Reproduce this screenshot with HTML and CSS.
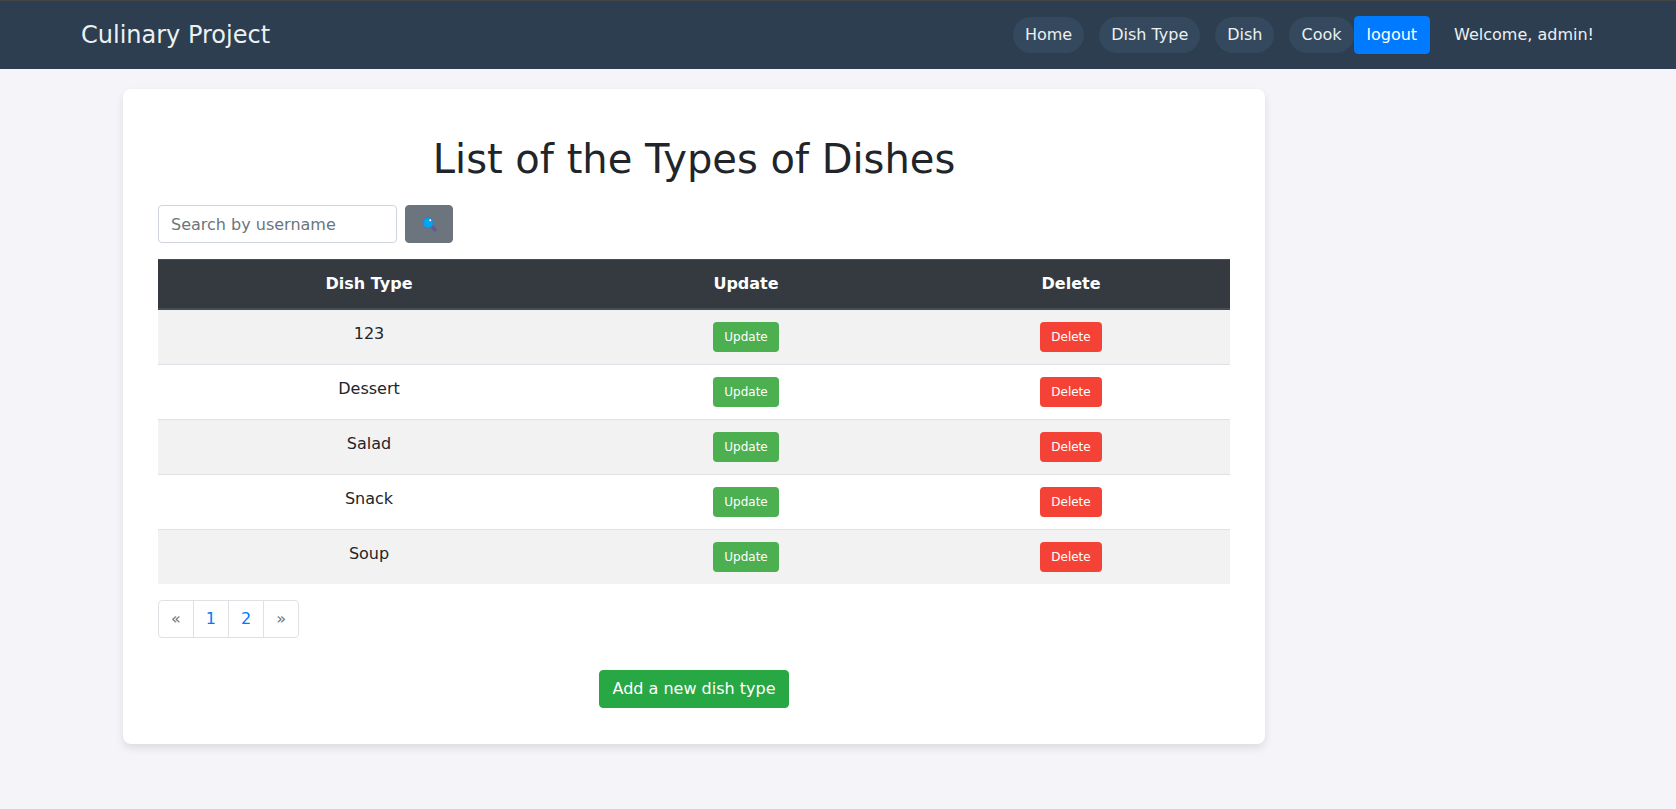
FILE: index.html
```html
<!DOCTYPE html>
<html lang="en">
<head>
<meta charset="utf-8">
<meta name="viewport" content="width=device-width, initial-scale=1">
<title>Culinary Project</title>
<link rel="stylesheet" href="styles.css">
</head>
<body>
<header class="topbar">
  <a class="brand" href="#">Culinary Project</a>
  <nav class="menu">
    <ul class="menu-list">
      <li><a class="pill" href="#">Home</a></li>
      <li><a class="pill" href="#">Dish Type</a></li>
      <li><a class="pill" href="#">Dish</a></li>
      <li><a class="pill" href="#">Cook</a></li>
    </ul>
    <button class="btn btn-primary" type="button">logout</button>
    <span class="welcome">Welcome, admin!</span>
  </nav>
</header>
<main class="card">
  <h1 class="title">List of the Types of Dishes</h1>
  <form class="search">
    <input class="search-input" type="text" aria-label="Search by username" placeholder="Search by username">
    <button class="btn btn-secondary" type="button" aria-label="Search">
      <svg class="search-icon" width="20" height="22" viewBox="0 0 20 22" aria-hidden="true">
        <path d="M13.2 14L16 16.700" stroke="#635994" stroke-width="3.600" stroke-linecap="round"/>
        <circle cx="9" cy="9.800" r="5.400" fill="#00a6ed" stroke="#5f6bab" stroke-width="1"/>
        <circle cx="11.200" cy="7.200" r="1" fill="#fff"/>
      </svg>
    </button>
  </form>
  <table class="dishes">
    <thead>
      <tr><th class="col-name" scope="col">Dish Type</th><th class="col-update" scope="col">Update</th><th scope="col">Delete</th></tr>
    </thead>
    <tbody>
      <tr><td>123</td><td><a class="action update" href="#">Update</a></td><td><a class="action delete" href="#">Delete</a></td></tr>
      <tr><td>Dessert</td><td><a class="action update" href="#">Update</a></td><td><a class="action delete" href="#">Delete</a></td></tr>
      <tr><td>Salad</td><td><a class="action update" href="#">Update</a></td><td><a class="action delete" href="#">Delete</a></td></tr>
      <tr><td>Snack</td><td><a class="action update" href="#">Update</a></td><td><a class="action delete" href="#">Delete</a></td></tr>
      <tr><td>Soup</td><td><a class="action update" href="#">Update</a></td><td><a class="action delete" href="#">Delete</a></td></tr>
    </tbody>
  </table>
  <ul class="pages">
    <li><a class="page muted" href="#">«</a></li>
    <li><a class="page" href="#">1</a></li>
    <li><a class="page" href="#">2</a></li>
    <li><a class="page muted" href="#">»</a></li>
  </ul>
  <div class="add">
    <a class="btn btn-success" href="#">Add a new dish type</a>
  </div>
</main>
</body>
</html>
```
FILE: styles.css
```css
*, *::before, *::after { box-sizing: border-box; }

body {
  margin: 0;
  background: #f4f4f9;
  color: #212529;
  font-family: Verdana, "DejaVu Sans", sans-serif;
  font-size: 16px;
  line-height: 24px;
}

a { text-decoration: none; }

.topbar {
  display: flex;
  align-items: center;
  justify-content: space-between;
  padding: 15px 82px 15px 81px;
  border-top: 1px solid #444;
  background: #2c3e50;
}

.brand { color: #ecf0f1; font-size: 24px; line-height: 36px; }

.menu { display: flex; align-items: center; }

.menu-list {
  display: flex;
  gap: 15px;
  margin: 0;
  padding: 0;
  list-style: none;
}

.pill {
  display: block;
  padding: 8px 12px;
  border-radius: 20px;
  background: #34495e;
  color: #ecf0f1;
  line-height: 20px;
}

.welcome { margin-left: 24px; color: #ecf0f1; }

.btn {
  display: inline-block;
  padding: 6px 12px;
  border: 1px solid transparent;
  border-radius: 4px;
  color: #fff;
  font: inherit;
  text-align: center;
  cursor: pointer;
}

.btn-primary { background: #007bff; border-color: #007bff; }
.btn-secondary { min-width: 48px; background: #6c757d; border-color: #6c757d; }
.btn-success { background: #28a745; border-color: #28a745; }

.card {
  max-width: 1142px;
  margin: 20px 0 20px 123px;
  padding: 35px 35px 36px;
  border-radius: 8px;
  background: #fff;
  box-shadow: 0 4px 8px rgba(0, 0, 0, 0.1);
}

.title {
  margin: 11px 0 22px;
  font-size: 40px;
  font-weight: 400;
  line-height: 48px;
  text-align: center;
}

.search { display: flex; gap: 8px; margin-bottom: 16px; }

.search-input {
  width: 239px;
  height: 38px;
  padding: 6px 12px;
  border: 1px solid #ced4da;
  border-radius: 4px;
  background: #fff;
  color: #495057;
  font: inherit;
}

.search-input::placeholder { color: #6c757d; opacity: 1; }

.search-icon { display: block; margin: 0 auto; }

.dishes {
  width: 100%;
  margin-bottom: 16px;
  border-collapse: collapse;
  table-layout: fixed;
  text-align: center;
}

.col-name { width: 422px; }
.col-update { width: 332px; }

.dishes th {
  padding: 12px;
  border-top: 1px solid #454d55;
  border-bottom: 2px solid #454d55;
  background: #343a40;
  color: #fff;
}

.dishes td {
  padding: 12px;
  border-top: 1px solid #dee2e6;
  vertical-align: top;
}

.dishes tbody tr:nth-child(odd) { background: #f2f2f2; }

.action {
  display: block;
  width: fit-content;
  margin: 0 auto;
  padding: 6px 11px;
  border-radius: 4px;
  color: #fff;
  font-size: 12px;
  line-height: 18px;
}

.update { background: #4caf50; }
.delete { background: #f44336; }

.pages {
  display: flex;
  margin: 0 0 32px;
  padding: 0;
  list-style: none;
}

.page {
  display: block;
  margin-left: -1px;
  padding: 6px 12px;
  border: 1px solid #dee2e6;
  background: #fff;
  color: #007bff;
}

.pages li:first-child .page { margin-left: 0; border-radius: 4px 0 0 4px; }
.pages li:last-child .page { border-radius: 0 4px 4px 0; }
.pages .muted { color: #6c757d; }

.add { display: flex; justify-content: center; }
```
